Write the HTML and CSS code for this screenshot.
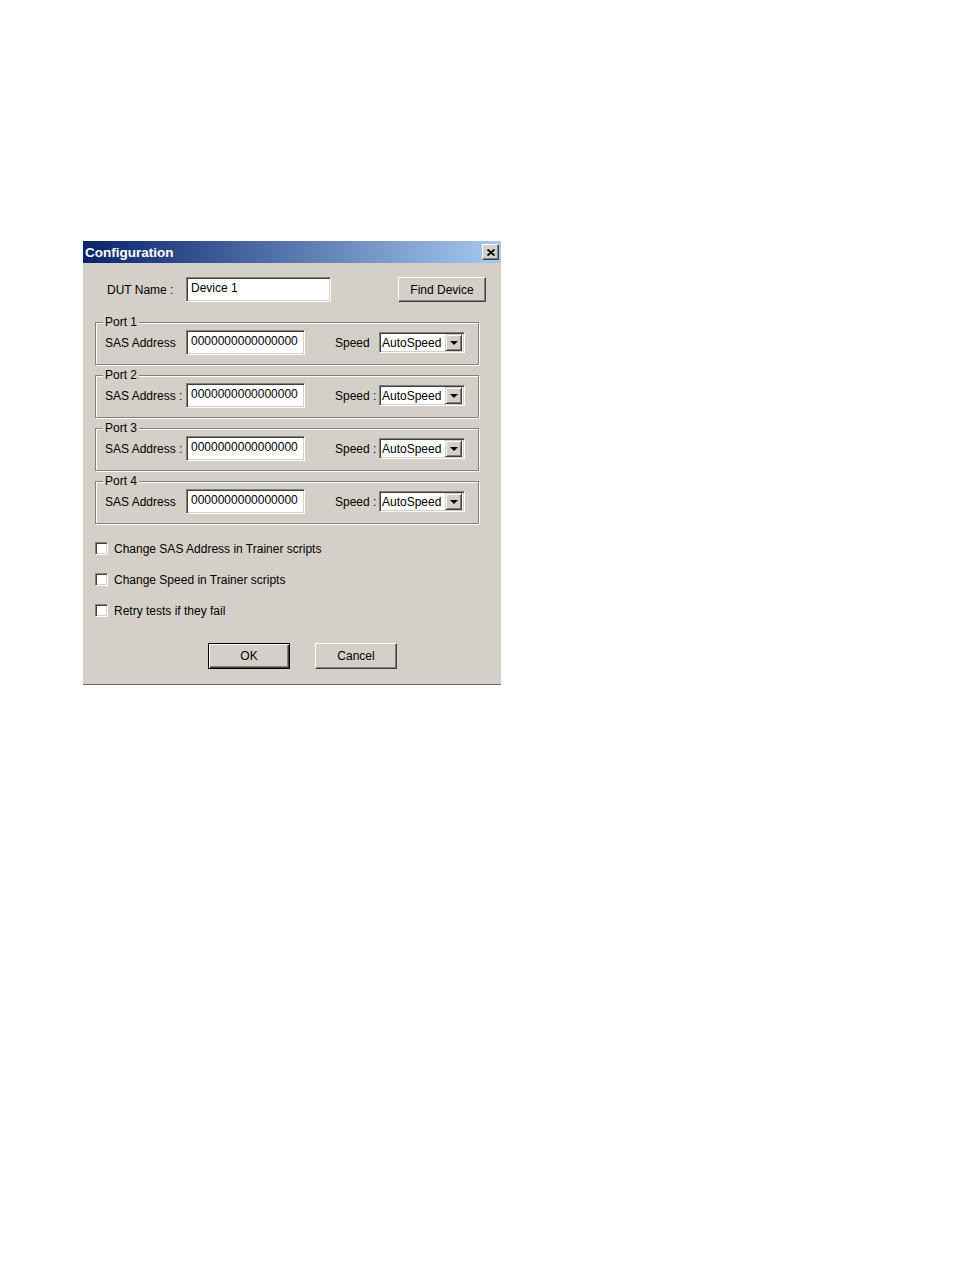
FILE: index.html
```html
<!DOCTYPE html>
<html lang="en">
<head>
    <meta charset="UTF-8">
    <meta name="viewport" content="width=device-width, initial-scale=1.0">
    <title>Configuration</title>
    <link rel="stylesheet" href="styles.css">
</head>
<body>

    <div class="dialog">
        <!-- title bar -->
        <div class="titlebar">
            <span class="title">Configuration</span>
            <span class="close-btn">
                <svg width="8" height="7" viewBox="0 0 8 7">
                    <path d="M0.5 0.5 L7.5 6.5 M7.5 0.5 L0.5 6.5" stroke="#000" stroke-width="1.8" fill="none"/>
                </svg>
            </span>
        </div>

        <div class="dut-row">
            <label class="dut-label">DUT Name :</label>
            <div class="field dut-field">Device 1</div>
            <button class="btn find-btn">Find Device</button>
        </div>

        <!-- ports -->
        <div class="group">
            <span class="group-title">Port 1</span>
            <div class="port-row">
                <label class="sas-label">SAS Address</label>
                <div class="field sas-field">0000000000000000</div>
                <label class="speed-label">Speed</label>
                <div class="combo"><span class="combo-text">AutoSpeed</span><span class="combo-btn"><i class="arrow"></i></span></div>
            </div>
        </div>

        <div class="group">
            <span class="group-title">Port 2</span>
            <div class="port-row">
                <label class="sas-label">SAS Address :</label>
                <div class="field sas-field">0000000000000000</div>
                <label class="speed-label">Speed :</label>
                <div class="combo"><span class="combo-text">AutoSpeed</span><span class="combo-btn"><i class="arrow"></i></span></div>
            </div>
        </div>

        <div class="group">
            <span class="group-title">Port 3</span>
            <div class="port-row">
                <label class="sas-label">SAS Address :</label>
                <div class="field sas-field">0000000000000000</div>
                <label class="speed-label">Speed :</label>
                <div class="combo"><span class="combo-text">AutoSpeed</span><span class="combo-btn"><i class="arrow"></i></span></div>
            </div>
        </div>

        <div class="group">
            <span class="group-title">Port 4</span>
            <div class="port-row">
                <label class="sas-label">SAS Address</label>
                <div class="field sas-field">0000000000000000</div>
                <label class="speed-label">Speed :</label>
                <div class="combo"><span class="combo-text">AutoSpeed</span><span class="combo-btn"><i class="arrow"></i></span></div>
            </div>
        </div>

        <!-- options -->
        <div class="check-row"><span class="check"></span><span>Change SAS Address in Trainer scripts</span></div>
        <div class="check-row"><span class="check"></span><span>Change Speed in Trainer scripts</span></div>
        <div class="check-row"><span class="check"></span><span>Retry tests if they fail</span></div>

        <div class="buttons">
            <button class="btn default-btn">OK</button>
            <button class="btn">Cancel</button>
        </div>
    </div>

</body>
</html>
```

FILE: styles.css
```css
body {
    margin: 0;
    background: #fff;
    font-family: "Liberation Sans", Arial, sans-serif;
    font-size: 12px;
    color: #000;
}
.dialog {
    margin: 241px 0 0 83px;
    width: 418px;
    height: 444px;
    box-sizing: border-box;
    background: #d4d0c8;
    border-bottom: 1px solid #646464;
    overflow: hidden;
}
.titlebar {
    height: 22px;
    background: linear-gradient(to right, #0a246a, #a6caf0);
    display: flex;
    align-items: center;
    justify-content: space-between;
    padding: 0 2px 0 2px;
}
.title {
    color: #fff;
    font-weight: bold;
    font-size: 13.5px;
}
.close-btn {
    width: 17px;
    height: 16px;
    box-sizing: border-box;
    background: #d4d0c8;
    border: 1px solid;
    border-color: #fff #404040 #404040 #fff;
    box-shadow: inset -1px -1px 0 #808080;
    display: flex;
    align-items: center;
    justify-content: center;
}
.dut-row {
    display: flex;
    align-items: center;
    height: 25px;
    margin-top: 14px;
    padding: 0 15px 0 24px;
}
.dut-label {
    width: 79px;
}
.field {
    box-sizing: border-box;
    height: 25px;
    background: #fff;
    border: 1px solid;
    border-color: #808080 #fff #fff #808080;
    box-shadow: inset 1px 1px 0 #404040, inset -1px -1px 0 #d4d0c8;
    padding: 3px 4px;
    line-height: 14px;
    white-space: nowrap;
}
.dut-field {
    width: 145px;
}
.btn {
    font-family: "Liberation Sans", Arial, sans-serif;
    font-size: 12px;
    color: #000;
    width: 82px;
    height: 26px;
    padding: 0;
    background: #d4d0c8;
    border: 1px solid;
    border-color: #fff #404040 #404040 #fff;
    box-shadow: inset -1px -1px 0 #808080;
    border-radius: 0;
}
.find-btn {
    margin-left: auto;
    width: 88px;
    height: 25px;
}
.default-btn {
    border: 1px solid #000;
    box-shadow: inset 1px 1px 0 #fff, inset -1px -1px 0 #404040, inset -2px -2px 0 #808080;
}
.group {
    position: relative;
    margin: 20px 0 0 12px;
    width: 384px;
    height: 43px;
    box-sizing: border-box;
    border: 1px solid #808080;
    box-shadow: 1px 1px 0 #fff, inset 1px 1px 0 #fff;
    padding: 7px 0 0 9px;
}
.group + .group {
    margin-top: 10px;
}
.group-title {
    position: absolute;
    top: -8px;
    left: 7px;
    padding: 0 2px;
    line-height: 14px;
    background: #d4d0c8;
}
.port-row {
    display: flex;
    align-items: center;
    height: 25px;
}
.sas-label {
    width: 81px;
}
.sas-field {
    width: 119px;
}
.speed-label {
    margin-left: 30px;
    width: 44px;
}
.combo {
    display: flex;
    align-items: center;
    box-sizing: border-box;
    width: 86px;
    height: 21px;
    background: #fff;
    border: 1px solid;
    border-color: #808080 #fff #fff #808080;
    box-shadow: inset 1px 1px 0 #404040, inset -1px -1px 0 #d4d0c8;
    padding: 1px 2px 1px 1px;
}
.combo-text {
    flex: 1;
    padding-left: 1px;
    white-space: nowrap;
}
.combo-btn {
    width: 17px;
    height: 17px;
    box-sizing: border-box;
    background: #d4d0c8;
    border: 1px solid;
    border-color: #d4d0c8 #404040 #404040 #d4d0c8;
    box-shadow: inset 1px 1px 0 #fff, inset -1px -1px 0 #808080;
    display: flex;
    align-items: center;
    justify-content: center;
}
.arrow {
    width: 0;
    height: 0;
    border-left: 4px solid transparent;
    border-right: 4px solid transparent;
    border-top: 4px solid #000;
}
.check-row {
    display: flex;
    align-items: center;
    margin: 18px 0 0 12px;
    height: 13px;
}
.check {
    width: 13px;
    height: 13px;
    box-sizing: border-box;
    background: #fff;
    border: 1px solid;
    border-color: #808080 #fff #fff #808080;
    box-shadow: inset 1px 1px 0 #404040, inset -1px -1px 0 #d4d0c8;
    margin-right: 6px;
}
.buttons {
    display: flex;
    gap: 25px;
    margin-top: 26px;
    padding-left: 125px;
}
```
